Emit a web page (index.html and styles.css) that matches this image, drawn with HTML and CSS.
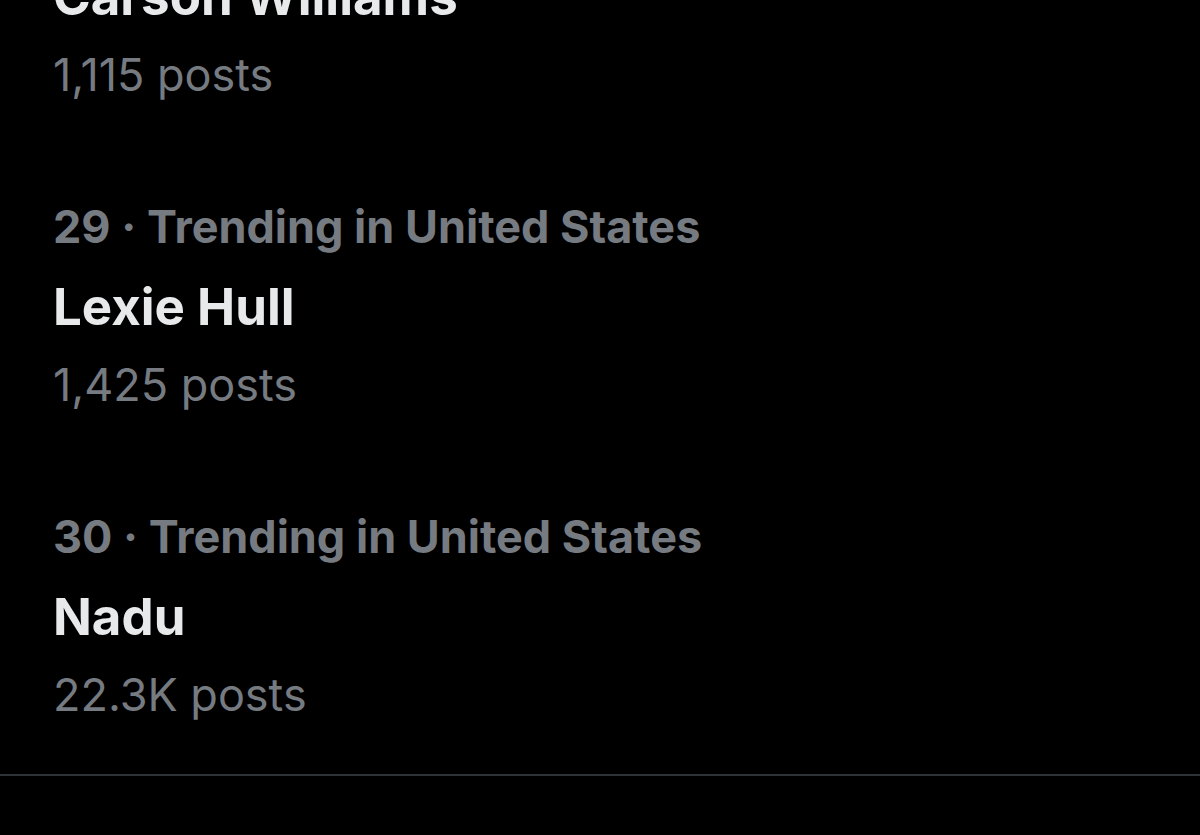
FILE: index.html
```html
<!DOCTYPE html>
<html lang="en">
<head>
<meta charset="utf-8">
<title>Trending</title>
<link rel="stylesheet" href="styles.css">
</head>
<body>
<main class="timeline">
  <section class="trends">
    <div class="trend">
      <div class="trend-meta">28 · Trending in United States</div>
      <div class="trend-name">Carson Williams</div>
      <div class="trend-count">1,115 posts</div>
    </div>
    <div class="trend">
      <div class="trend-meta">29 · Trending in United States</div>
      <div class="trend-name">Lexie Hull</div>
      <div class="trend-count">1,425 posts</div>
    </div>
    <div class="trend">
      <div class="trend-meta">30 · Trending in United States</div>
      <div class="trend-name">Nadu</div>
      <div class="trend-count">22.3K posts</div>
    </div>
  </section>
  <section class="next-section"></section>
</main>
</body>
</html>
```

FILE: styles.css
```css
html, body {
  margin: 0;
  padding: 0;
  background: #000000;
  height: 100%;
  overflow: hidden;
}

body {
  font-family: Inter, "Noto Sans", Roboto, sans-serif;
  -webkit-font-smoothing: antialiased;
}

.timeline {
  margin-top: -156px;
}

.trends {
  display: flex;
  flex-direction: column;
}

.trend {
  padding: 32px 53px 39px;
}

.trend-meta {
  color: #767b81;
  font-size: 45px;
  font-weight: 700;
  line-height: 82px;
  white-space: nowrap;
}

.trend-name {
  color: #e7e9ea;
  font-size: 51px;
  font-weight: 700;
  line-height: 77px;
  white-space: nowrap;
}

.trend-count {
  color: #767b81;
  font-size: 45px;
  font-weight: 400;
  line-height: 80px;
  white-space: nowrap;
}

.next-section {
  border-top: 2px solid #2f3336;
  height: 200px;
}
```
